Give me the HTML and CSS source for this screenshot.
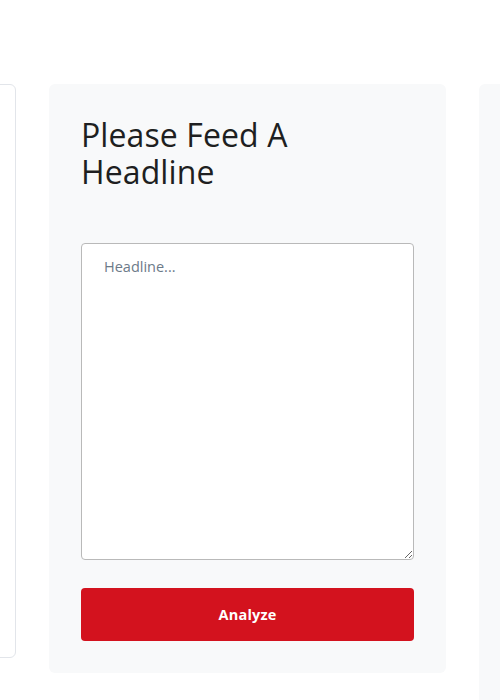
FILE: index.html
```html
<!DOCTYPE html>
<html lang="en">
<head>
<meta charset="utf-8">
<title>Headline</title>
<link rel="stylesheet" href="styles.css">
</head>
<body>
<div class="viewport">
  <div class="track">
    <div class="card card-side"></div>
    <div class="card card-main">
      <h2 class="title">Please Feed A Headline</h2>
      <textarea class="input" placeholder="Headline..."></textarea>
      <button class="btn" type="button">Analyze</button>
    </div>
    <div class="card card-right"></div>
  </div>
</div>
</body>
</html>
```

FILE: styles.css
```css
html, body {
  margin: 0;
  padding: 0;
  background: #ffffff;
}

body {
  font-family: "Open Sans", "Liberation Sans", sans-serif;
  color: #212529;
}

.viewport {
  width: 100%;
  height: 700px;
  overflow: hidden;
}

.track {
  display: flex;
  align-items: flex-start;
  gap: 33px;
  margin-left: -381px;
  padding-top: 84px;
  width: 1257px;
}

.card {
  flex: 0 0 397px;
  box-sizing: border-box;
  border-radius: 6px;
}

.card-side {
  height: 574px;
  background: #ffffff;
  border: 1px solid #e2e5ea;
}

.card-right {
  height: 640px;
  background: #f8f9fa;
}

.card-main {
  background: #f8f9fa;
  padding: 32px;
  display: flex;
  flex-direction: column;
}

.title {
  margin: 0 0 53px;
  font-size: 32px;
  font-weight: 400;
  line-height: 37px;
  letter-spacing: 0.1px;
  color: #1e1f21;
}

.input {
  display: block;
  box-sizing: border-box;
  width: 100%;
  height: 317px;
  margin: 0;
  padding: 11px 22px;
  border: 1px solid #b9b9b9;
  border-radius: 4px;
  background: #ffffff;
  font-family: inherit;
  font-size: 14.5px;
  line-height: 24px;
  color: #212529;
  resize: vertical;
}

.input::placeholder {
  color: #6c7a89;
  opacity: 1;
}

.btn {
  display: block;
  width: 100%;
  height: 53px;
  margin-top: 28px;
  border: none;
  border-radius: 4px;
  background: #d3121e;
  color: #ffffff;
  font-family: inherit;
  font-size: 14.5px;
  font-weight: 700;
  letter-spacing: 0.2px;
  cursor: pointer;
}
```
